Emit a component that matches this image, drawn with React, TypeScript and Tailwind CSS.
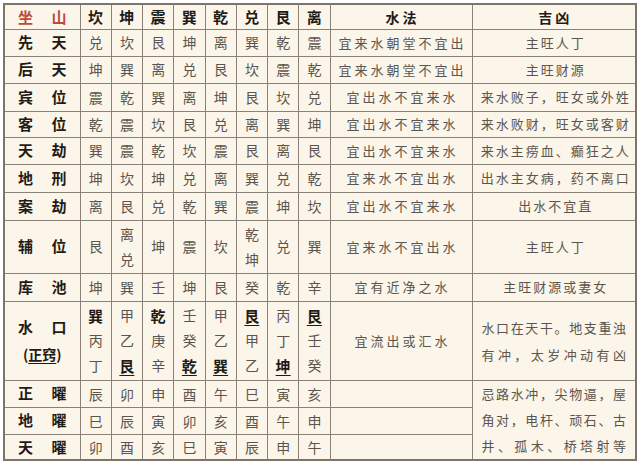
const mountains = ["坎", "坤", "震", "巽", "乾", "兑", "艮", "离"];

type Row = {
  label: [string, string];
  cells: string[];
  water: string;
  verdict: string;
  h: string;
};

const rows: Row[] = [
  { label: ["先", "天"], cells: ["兑", "坎", "艮", "坤", "离", "巽", "乾", "震"], water: "宜来水朝堂不宜出", verdict: "主旺人丁", h: "h-[27px]" },
  { label: ["后", "天"], cells: ["坤", "巽", "离", "兑", "艮", "坎", "震", "乾"], water: "宜来水朝堂不宜出", verdict: "主旺财源", h: "h-[27px]" },
  { label: ["宾", "位"], cells: ["震", "乾", "巽", "离", "坤", "艮", "坎", "兑"], water: "宜出水不宜来水", verdict: "来水败子，旺女或外姓", h: "h-[28px]" },
  { label: ["客", "位"], cells: ["乾", "震", "坎", "艮", "兑", "离", "巽", "坤"], water: "宜出水不宜来水", verdict: "来水败财，旺女或客财", h: "h-[26px]" },
  { label: ["天", "劫"], cells: ["巽", "震", "乾", "坎", "震", "艮", "离", "艮"], water: "宜出水不宜来水", verdict: "来水主痨血、癫狂之人", h: "h-[27px]" },
  { label: ["地", "刑"], cells: ["坤", "坎", "坤", "兑", "离", "巽", "兑", "乾"], water: "宜来水不宜出水", verdict: "出水主女病，药不离口", h: "h-[28px]" },
  { label: ["案", "劫"], cells: ["离", "艮", "兑", "乾", "巽", "震", "坤", "坎"], water: "宜出水不宜来水", verdict: "出水不宜直", h: "h-[28px]" },
  { label: ["辅", "位"], cells: ["艮", "离\n兑", "坤", "震", "坎", "乾\n坤", "兑", "巽"], water: "宜来水不宜出水", verdict: "主旺人丁", h: "h-[53px]" },
  { label: ["库", "池"], cells: ["坤", "巽", "壬", "坤", "艮", "癸", "乾", "辛"], water: "宜有近净之水", verdict: "主旺财源或妻女", h: "h-[28px]" },
];

// 水口 column stacks: [char, bold, underline]
const outlets: [string, boolean, boolean][][] = [
  [["巽", true, false], ["丙", false, false], ["丁", false, false]],
  [["甲", false, false], ["乙", false, false], ["艮", true, true]],
  [["乾", true, false], ["庚", false, false], ["辛", false, false]],
  [["壬", false, false], ["癸", false, false], ["乾", true, true]],
  [["甲", false, false], ["乙", false, false], ["巽", true, true]],
  [["艮", true, true], ["甲", false, false], ["乙", false, false]],
  [["丙", false, false], ["丁", false, false], ["坤", true, true]],
  [["艮", true, true], ["壬", false, false], ["癸", false, false]],
];

const stars: { label: [string, string]; cells: string[]; h: string }[] = [
  { label: ["正", "曜"], cells: ["辰", "卯", "申", "酉", "午", "巳", "寅", "亥"], h: "h-[27px]" },
  { label: ["地", "曜"], cells: ["巳", "辰", "寅", "卯", "亥", "酉", "午", "申"], h: "h-[27px]" },
  { label: ["天", "曜"], cells: ["卯", "酉", "亥", "巳", "寅", "辰", "申", "午"], h: "h-[26px]" },
];

const cell = "border border-[#8a8178] p-0 text-center align-middle";
const data = "text-[14px] text-[#5a554e]";
const water = "pl-[3px] text-[13px] tracking-[3px] text-[#5a554e]";
const verdict = "pl-[4px] text-[13px] tracking-[2px] text-[#5a554e]";

function Label({ pair, red }: { pair: [string, string]; red?: boolean }) {
  return (
    <div className={`flex justify-between px-[13px] text-[15px] font-bold ${red ? "text-[#bf4a3a]" : "text-[#1f1b17]"}`}>
      <span>{pair[0]}</span>
      <span>{pair[1]}</span>
    </div>
  );
}

function Justified({ lines, lh }: { lines: string[]; lh: string }) {
  return (
    <div className="px-[9px] text-[13px] text-[#5a554e]">
      {lines.map((line) => (
        <div key={line} className={`text-justify ${lh} [text-align-last:justify]`}>{line}</div>
      ))}
    </div>
  );
}

export default function App() {
  return (
    <div className="min-h-[464px] bg-white pl-[3px] pt-[3px] font-['Noto_Sans_CJK_SC','Noto_Sans',sans-serif]">
      <table className="w-[634px] table-fixed border-collapse border-2 border-[#7d746b] bg-[#fcf5ea]">
        <colgroup>
          <col className="w-[76px]" />
          {mountains.map((m) => (
            <col key={m} className="w-[31.25px]" />
          ))}
          <col className="w-[142px]" />
          <col />
        </colgroup>
        <tbody>
          <tr className="h-[25px]">
            <td className={cell}>
              <Label pair={["坐", "山"]} red />
            </td>
            {mountains.map((m) => (
              <td key={m} className={`${cell} text-[15px] leading-[22px] font-bold text-[#1f1b17]`}>{m}</td>
            ))}
            <td className={`${cell} pl-[3px] text-[14px] leading-[22px] font-bold tracking-[3px] text-[#1f1b17]`}>水法</td>
            <td className={`${cell} pl-[3px] text-[14px] leading-[22px] font-bold tracking-[3px] text-[#1f1b17]`}>吉凶</td>
          </tr>

          {rows.map((row) => (
            <tr key={row.label.join("")} className={row.h}>
              <td className={cell}>
                <Label pair={row.label} />
              </td>
              {row.cells.map((c, i) => (
                <td key={i} className={`${cell} ${data} whitespace-pre-line leading-[25px]`}>{c}</td>
              ))}
              <td className={`${cell} ${water}`}>{row.water}</td>
              <td className={`${cell} ${verdict}`}>{row.verdict}</td>
            </tr>
          ))}

          <tr className="h-[79px]">
            <td className={cell}>
              <Label pair={["水", "口"]} />
              <div className="mt-[6px] text-[14px] font-bold text-[#1f1b17]">
                (<span className="underline underline-offset-[3px]">正窍</span>)
              </div>
            </td>
            {outlets.map((stack, i) => (
              <td key={i} className={`${cell} ${data}`}>
                {stack.map(([ch, bold, under], j) => (
                  <div
                    key={j}
                    className={`leading-[25px] ${bold ? "text-[15px] font-bold text-[#1f1b17]" : ""} ${under ? "underline underline-offset-[3px]" : ""}`}
                  >
                    {ch}
                  </div>
                ))}
              </td>
            ))}
            <td className={`${cell} ${water}`}>宜流出或汇水</td>
            <td className={cell}>
              <Justified lh="leading-[27px]" lines={["水口在天干。地支重浊", "有冲，太岁冲动有凶"]} />
            </td>
          </tr>

          {stars.map((row, r) => (
            <tr key={row.label.join("")} className={row.h}>
              <td className={cell}>
                <Label pair={row.label} />
              </td>
              {row.cells.map((c, i) => (
                <td key={i} className={`${cell} ${data} leading-[24px]`}>{c}</td>
              ))}
              <td className={cell} />
              {r === 0 ? (
                <td rowSpan={3} className={cell}>
                  <Justified lh="leading-[26px]" lines={["忌路水冲，尖物逼，屋", "角对，电杆、顽石、古", "井、孤木、桥塔射等"]} />
                </td>
              ) : null}
            </tr>
          ))}
        </tbody>
      </table>
    </div>
  );
}
